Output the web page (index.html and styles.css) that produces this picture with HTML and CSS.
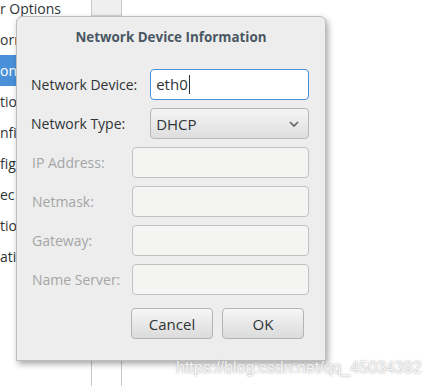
FILE: index.html
```html
<!DOCTYPE html>
<html lang="en">
<head>
    <meta charset="UTF-8">
    <title>Network Device Information</title>
    <link rel="stylesheet" href="styles.css">
</head>
<body>

    <div class="window">
        <ul class="side-list">
            <li>r Options</li>
            <li>orm</li>
            <li class="selected">onfi</li>
            <li>tion</li>
            <li>nfig</li>
            <li>fig</li>
            <li>ec</li>
            <li>tio</li>
            <li>ati</li>
        </ul>
        <div class="column">
            <div class="column-head"></div>
        </div>
    </div>

    <div class="dialog">
        <div class="dialog-title">Network Device Information</div>

        <div class="form-grid">
            <label>Network Device:</label>
            <div class="entry focused">eth0<span class="cursor"></span></div>
            <label>Network Type:</label>
            <div class="combo">
                <span>DHCP</span>
                <svg width="10" height="6" viewBox="0 0 10 6"><path d="M1 1 L5 5 L9 1" fill="none" stroke="#5c6166" stroke-width="1.6"/></svg>
            </div>
        </div>

        <div class="form-grid disabled">
            <label>IP Address:</label>
            <div class="entry"></div>
            <label>Netmask:</label>
            <div class="entry"></div>
            <label>Gateway:</label>
            <div class="entry"></div>
            <label>Name Server:</label>
            <div class="entry"></div>
        </div>

        <div class="buttons">
            <button>Cancel</button>
            <button>OK</button>
        </div>
    </div>

    <div class="watermark">https://blog.csdn.net/qq_45034392</div>

</body>
</html>
```

FILE: styles.css
```css
body { margin: 0; background: #fff; font-family: 'Open Sans', 'DejaVu Sans', sans-serif; font-size: 14px; color: #2e3436; width: 428px; height: 386px; overflow: hidden; position: relative; }

.window { display: flex; height: 386px; }
.side-list { list-style: none; margin: -7px 0 0; padding: 0; width: 91px; }
.side-list li { height: 31px; line-height: 31px; white-space: nowrap; overflow: hidden; }
.side-list li.selected { background: #4a90d9; color: #fff; }
.column { width: 29px; border-left: 1px solid #c9c9c9; border-right: 1px solid #c9c9c9; }
.column-head { height: 15px; background: #efefef; border-bottom: 1px solid #d4d4d4; }

.dialog { position: absolute; left: 16px; top: 16px; width: 278px; height: 343px; background: #ededed; border: 1px solid #bdbdbd; border-radius: 6px 6px 0 0; box-shadow: 2px 3px 6px rgba(0,0,0,0.35); display: flex; flex-direction: column; padding: 0 16px 0 14px; }
.dialog-title { height: 40px; line-height: 40px; text-align: center; font-weight: bold; font-size: 13.4px; color: #4a5864; margin: 0 -16px 0 -14px; }

.form-grid { display: grid; grid-template-columns: auto 1fr; column-gap: 13px; row-gap: 8px; align-items: center; margin-top: 12px; }
.form-grid + .form-grid { margin-top: 8px; column-gap: 12px; }
.form-grid label { white-space: nowrap; }
.form-grid.disabled label { color: #a4a6a6; padding-left: 1px; }

.entry { height: 29px; border: 1px solid #c2c2c2; border-radius: 4px; background: #f4f4f2; padding: 0 5px; line-height: 29px; font-size: 15px; }
.entry.focused { background: #fff; border-color: #4a90d9; }
.cursor { display: inline-block; width: 1px; height: 19px; background: #2e3436; vertical-align: -4px; margin-left: 1px; }
.combo { height: 29px; border: 1px solid #b6b6b6; border-radius: 4px; background: linear-gradient(#f4f4f4, #dedede); display: flex; align-items: center; justify-content: space-between; padding: 0 9px 0 5px; font-size: 15px; }

.buttons { display: flex; justify-content: flex-end; gap: 9px; margin-top: 13px; margin-right: 5px; }
.buttons button { width: 82px; height: 31px; border: 1px solid #b3b3b3; border-radius: 4px; background: linear-gradient(#f6f6f6, #dbdbdb); font-family: inherit; font-size: 15px; color: #2e3436; padding: 0; }

.watermark { position: absolute; left: 176px; top: 359px; font-family: 'Liberation Sans', sans-serif; font-size: 16px; color: rgba(255,255,255,0.85); text-shadow: 0 0 2px #9a9a9a; }
```
